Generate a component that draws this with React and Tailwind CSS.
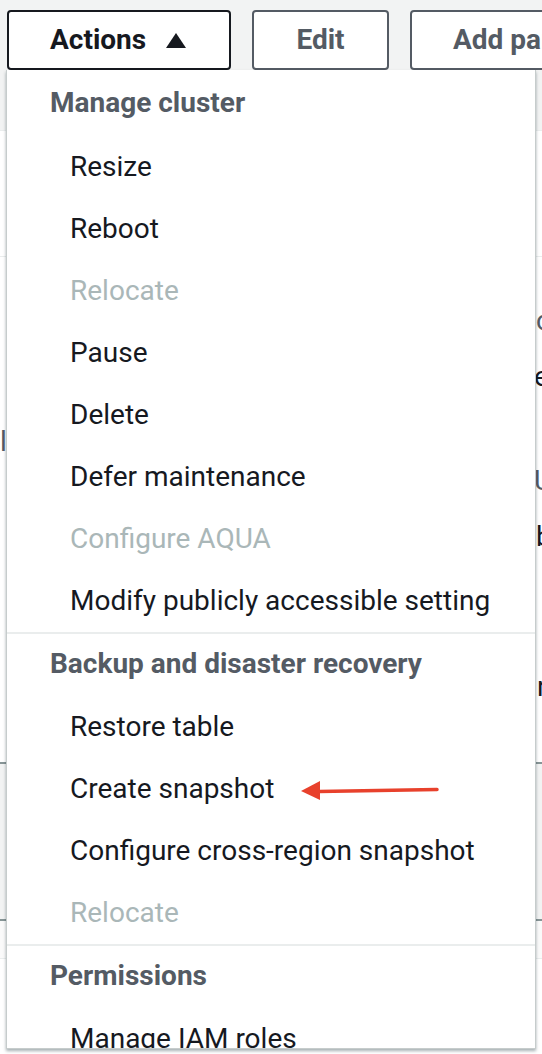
import React from 'react';

const groups = [
  {
    title: 'Manage cluster',
    items: [
      { label: 'Resize' },
      { label: 'Reboot' },
      { label: 'Relocate', disabled: true },
      { label: 'Pause' },
      { label: 'Delete' },
      { label: 'Defer maintenance' },
      { label: 'Configure AQUA', disabled: true },
      { label: 'Modify publicly accessible setting' }
    ]
  },
  {
    title: 'Backup and disaster recovery',
    items: [
      { label: 'Restore table' },
      { label: 'Create snapshot', arrow: true },
      { label: 'Configure cross-region snapshot' },
      { label: 'Relocate', disabled: true }
    ]
  },
  {
    title: 'Permissions',
    items: [{ label: 'Manage IAM roles' }]
  }
];

function Arrow() {
  return (
    <svg width="140" height="22" viewBox="0 0 140 22" className="ml-[27px] mt-[2px]">
      <path d="M18 12.5 L136 10.5" stroke="#e8412c" strokeWidth="3.5" strokeLinecap="round" />
      <path d="M0 12 L19 2 L19 21 Z" fill="#e8412c" />
    </svg>
  );
}

function Fragment({ text, pl, color = '#16191f' }) {
  return (
    <div className="flex items-center h-[28px]">
      <span className={`${pl} text-[28px] leading-none whitespace-nowrap`} style={{ color }}>
        {text}
      </span>
    </div>
  );
}

export default function App() {
  return (
    <div className="relative w-[542px] h-[1054px] overflow-hidden bg-white" style={{ fontFamily: 'Roboto, "Liberation Sans", sans-serif' }}>
      {/* Page behind the menu */}
      <div className="h-[131px] bg-[#f2f3f3] border-b border-[#eaeded]">
        <div className="flex gap-[21px] pl-[7px] pt-[10px]">
          <button className="flex shrink-0 items-center h-[60px] w-[224px] pl-[41px] border-2 border-[#16191f] rounded-[4px] bg-white text-[28px] font-bold text-[#16191f]">
            Actions
            <svg width="20" height="15" viewBox="0 0 20 15" className="ml-[20px]">
              <path d="M10 0 L20 15 L0 15 Z" fill="#16191f" />
            </svg>
          </button>
          <button className="flex shrink-0 items-center justify-center h-[60px] w-[137px] border-2 border-[#545b64] rounded-[4px] bg-white text-[28px] font-bold text-[#545b64]">
            Edit
          </button>
          <button className="flex shrink-0 items-center h-[60px] w-[300px] pl-[41px] border-2 border-[#545b64] rounded-[4px] bg-white text-[28px] font-bold text-[#545b64] whitespace-nowrap">
            Add parameter
          </button>
        </div>
      </div>
      <div className="h-[126px] bg-white border-b border-[#eaeded]"></div>
      <div className="h-[505px] bg-white">
        <div className="h-[50px]"></div>
        <Fragment text="co" pl="pl-[536px]" color="#545b64" />
        <div className="h-[28px]"></div>
        <Fragment text="ec" pl="pl-[534px]" />
        <div className="h-[37px]"></div>
        <Fragment text="ld" pl="pl-0" color="#545b64" />
        <div className="h-[11px]"></div>
        <Fragment text="U" pl="pl-[534px]" color="#545b64" />
        <div className="h-[28px]"></div>
        <Fragment text="bo" pl="pl-[536px]" />
        <div className="h-[122px]"></div>
        <Fragment text="r" pl="pl-[537px]" />
      </div>
      <div className="h-[157px] bg-[#f2f3f3] border-t-2 border-[#879596]"></div>
      <div className="h-[40px] bg-[#fafafa] border-t-2 border-[#879596] border-b border-b-[#eaeded]"></div>

      {/* Dropdown menu */}
      <div className="absolute left-[6px] top-[70px] w-[530px] h-[979px] overflow-hidden pt-[2px] bg-white border-x border-b border-[#c6cccc] shadow-[0_2px_3px_rgba(0,28,36,0.35)]">
        {groups.map((group, gi) => (
          <div key={group.title} className={gi > 0 ? 'border-t-2 border-[#eaeded]' : ''}>
            <div className={`flex items-center pl-[43px] mb-[2px] text-[28px] font-bold text-[#545b64] ${gi > 0 ? 'h-[60px]' : 'h-[62px]'}`}>
              {group.title}
            </div>
            {group.items.map((item, ii) => (
              <div
                key={ii}
                className={`flex items-center h-[62px] pl-[63px] text-[28px] whitespace-nowrap ${item.disabled ? 'text-[#aab7b8]' : 'text-[#16191f]'}`}
              >
                {item.label}
                {item.arrow && <Arrow />}
              </div>
            ))}
          </div>
        ))}
      </div>
    </div>
  );
}
